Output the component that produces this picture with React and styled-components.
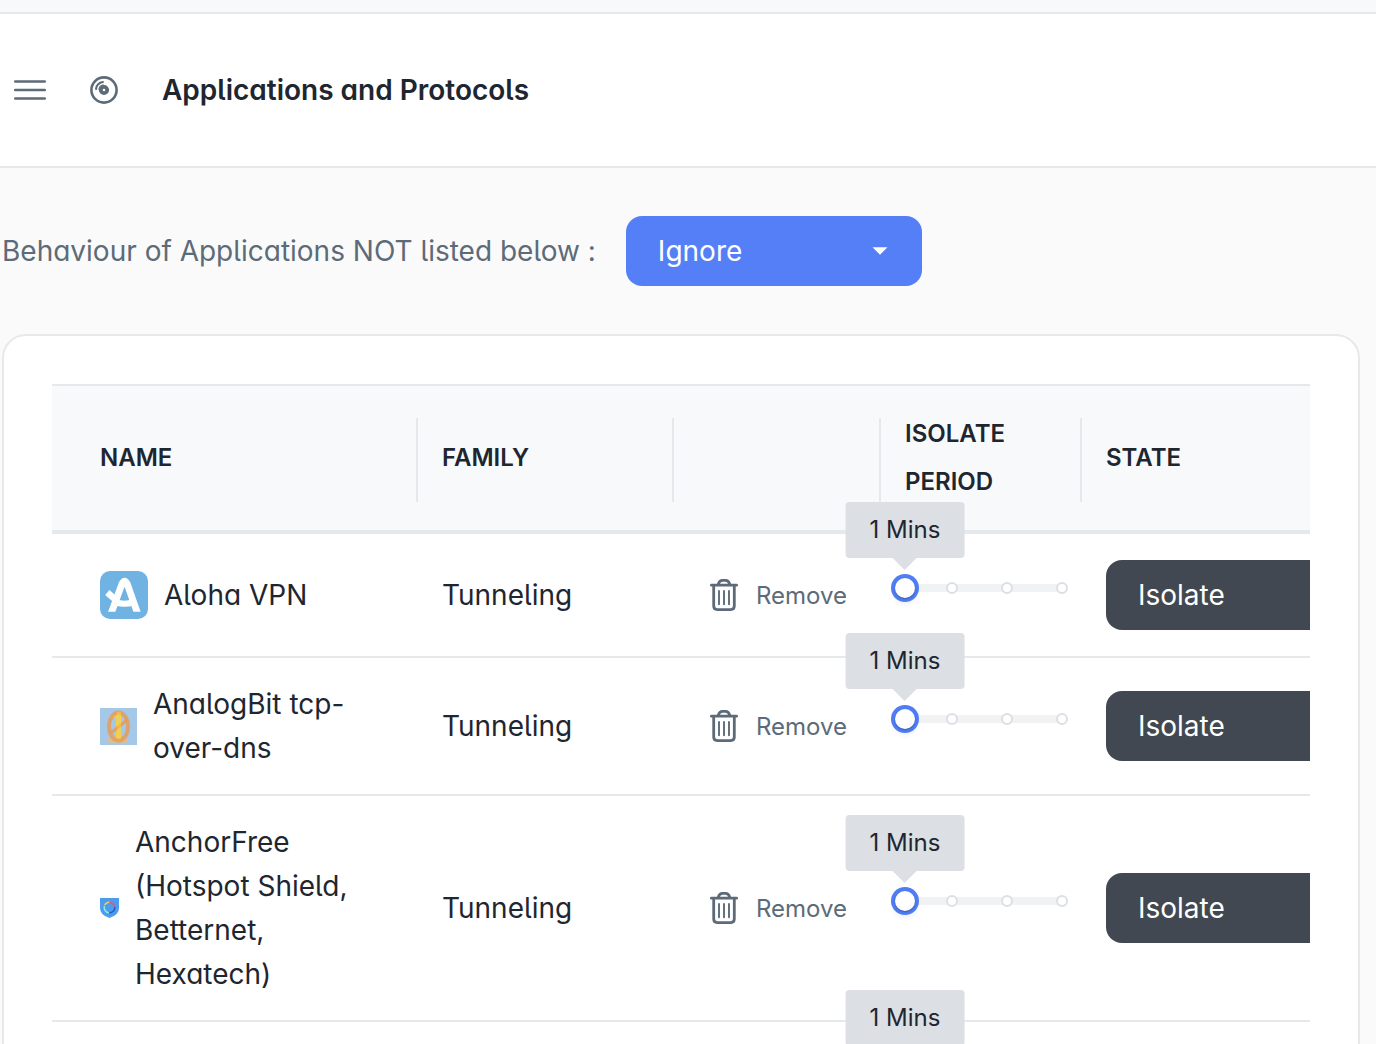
import React, { useId, useState } from 'react';
import styled, { createGlobalStyle } from 'styled-components';

const colors = {
    text: '#1e2630',
    muted: '#5d6b79',
    line: '#e6e9ec',
    page: '#fafafa',
    strip: '#f8f9fb',
    blue: '#557ff7',
    dark: '#414851',
    tip: '#dcdfe4',
};

const GlobalStyle = createGlobalStyle`
    * { box-sizing: border-box; }
    html { scrollbar-width: none; }
    body {
        margin: 0;
        background: ${colors.page};
        color: ${colors.text};
        font-family: Inter, 'Liberation Sans', sans-serif;
        font-size: 28px;
        line-height: 44px;
        font-optical-sizing: none;
    }
    select, button, input { font-family: inherit; }
`;

/* ------ Page shell ------ */
const Page = styled.div`
    min-height: 100vh;
`;

const TopStrip = styled.div`
    height: 14px;
    background: ${colors.strip};
    border-bottom: 2px solid ${colors.line};
`;

const Header = styled.header`
    display: flex;
    align-items: center;
    height: 154px;
    padding: 0 14px;
    background: #fff;
    border-bottom: 2px solid ${colors.line};
    color: ${colors.muted};
`;

const MenuButton = styled.button`
    display: flex;
    padding: 0;
    margin-right: 44px;
    border: 0;
    background: none;
    color: inherit;
    cursor: pointer;
`;

const Title = styled.h1`
    margin: 0 0 0 44px;
    color: ${colors.text};
    font-size: 28px;
    font-weight: 600;
    font-feature-settings: 'cv05', 'cv11';
`;

const Main = styled.main`
    padding: 48px 16px 48px 2px;
`;

const Toolbar = styled.div`
    display: flex;
    align-items: center;
    gap: 30px;
    margin-bottom: 48px;
`;

const Label = styled.label`
    color: ${colors.muted};
    font-feature-settings: 'cv05', 'cv11';
`;

/* ------ Drop-down ------ */
const SelectBox = styled.div`
    display: grid;
    align-items: center;
    width: 296px;
    color: #fff;

    > * { grid-area: 1 / 1; }
    svg {
        justify-self: end;
        margin-right: 34px;
        pointer-events: none;
    }
`;

const StyledSelect = styled.select`
    appearance: none;
    width: 100%;
    height: 70px;
    padding: 0 32px;
    border: 0;
    border-radius: 16px;
    background: ${(props) => (props.$dark ? colors.dark : colors.blue)};
    color: inherit;
    font-size: 28px;
    cursor: pointer;
`;

/* ------ Table ------ */
const Card = styled.section`
    padding: 48px;
    background: #fff;
    border: 2px solid ${colors.line};
    border-radius: 24px;
`;

const TableScroll = styled.div`
    overflow-x: auto;
`;

const Table = styled.table`
    table-layout: fixed;
    width: 100%;
    min-width: 1374px;
    border-spacing: 0;
`;

const Col = styled.col`
    width: ${(props) => props.$width}px;
`;

const Th = styled.th`
    padding: 24px;
    background: ${colors.strip};
    border-top: 2px solid ${colors.line};
    border-bottom: 4px solid ${colors.line};
    font-size: 24px;
    font-weight: 600;
    line-height: 48px;
    text-align: left;
    text-transform: uppercase;

    &:first-child { padding-left: 48px; }
    &:not(:last-child) {
        background: linear-gradient(${colors.line}, ${colors.line}) right 32px / 2px 84px no-repeat ${colors.strip};
    }
`;

const Td = styled.td`
    padding: 24px;
    border-bottom: 2px solid ${colors.line};
    font-feature-settings: 'cv05', 'cv11';

    &:first-child { padding-left: 48px; }
`;

const AppName = styled.div`
    display: flex;
    align-items: center;
    gap: 16px;

    svg { flex: none; }
`;

const RemoveButton = styled.button`
    display: flex;
    align-items: center;
    gap: 16px;
    padding: 0;
    margin: 0 auto;
    border: 0;
    background: none;
    color: ${colors.muted};
    font-size: 24px;
    cursor: pointer;
`;

const StateBox = styled(SelectBox)`
    margin: 2px 0;
`;

/* ------ Slider ------ */
const SliderBox = styled.div`
    position: relative;
    display: flex;
    align-items: center;
    width: 157px;
    height: 28px;
    margin-bottom: 14px;
`;

const Rail = styled.div`
    flex: 1;
    height: 8px;
    border-radius: 4px;
    background: #f1f2f4;
`;

const Dot = styled.span`
    position: absolute;
    top: 8px;
    width: 12px;
    height: 12px;
    margin-left: -6px;
    border: 2px solid ${colors.tip};
    border-radius: 50%;
    background: #fff;
`;

const Range = styled.input`
    appearance: none;
    position: absolute;
    left: -10px;
    width: 177px;
    height: 28px;
    margin: 0;
    background: none;
    cursor: pointer;

    &::-webkit-slider-thumb {
        appearance: none;
        width: 20px;
        height: 20px;
        border-radius: 50%;
        background: #fff;
        box-shadow: 0 1px 2px rgba(0, 0, 0, 0.3), 0 0 0 4px #4f7df5, 0 6px 6px rgba(0, 0, 0, 0.08);
    }
`;

const Tooltip = styled.output`
    position: absolute;
    bottom: 44px;
    padding: 4px 24px;
    border-radius: 4px;
    background: ${colors.tip};
    font-size: 24px;
    line-height: 48px;
    font-feature-settings: normal;
    white-space: nowrap;
    transform: translateX(-50%);

    &::after {
        content: '';
        position: absolute;
        top: 100%;
        left: 50%;
        margin-left: -12px;
        border: 12px solid transparent;
        border-top-color: ${colors.tip};
        border-bottom: 0;
    }
`;

/* ------ Icons ------ */
const MenuIcon = () => (
    <svg width="32" height="32" viewBox="0 0 32 32" stroke="currentColor" strokeWidth="2.5" strokeLinecap="round">
        <path d="M1.200 7.500h29.600M1.200 16h29.600M1.200 24.500h29.600" />
    </svg>
);

const DiscIcon = () => (
    <svg width="28" height="28" viewBox="0 0 28 28" fill="none" stroke="currentColor" strokeWidth="2.6">
        <circle cx="14" cy="14" r="12.600" />
        <circle cx="14" cy="14" r="3.200" strokeWidth="3.8" />
        <path d="M6 13A8.200 8.200 0 0 1 13 6" strokeWidth="2" strokeLinecap="round" />
        <path d="M8.600 13.500A5.500 5.500 0 0 1 13.500 8.600" strokeWidth="1" />
    </svg>
);

const CaretIcon = () => (
    <svg width="16" height="8" viewBox="0 0 16 8" fill="currentColor">
        <path d="M.5.3h15L8 7.8z" />
    </svg>
);

const TrashIcon = () => (
    <svg width="32" height="32" viewBox="0 0 32 32" fill="none" stroke="currentColor" strokeWidth="2.800" strokeLinecap="round" strokeLinejoin="round">
        <path d="M3.400 6.200h25.200" />
        <path d="M5.700 6.500v20.600q0 3.500 3.500 3.500h13.600q3.500 0 3.500-3.500V6.500" />
        <path d="M10.200 5.500q1.200-4.100 4.200-4.100h3.200q3 0 4.200 4.100" />
        <path d="M11 12v13.200M16 12v13.200M21 12v13.200" strokeWidth="1.900" />
    </svg>
);

const AlohaLogo = () => {
    const clipId = useId();

    return (
        <svg width="48" height="48" viewBox="0 0 48 48">
            <clipPath id={clipId}><path d="M0 0h48v40.700H0z" /></clipPath>
            <rect width="48" height="48" rx="10" fill="#70b3e3" />
            <g fill="none" stroke="#fff" clipPath={`url(#${clipId})`}>
                <path d="M10.200 45 22 12.800q2.600-5.500 5.200 0L38.500 45" strokeWidth="6.800" />
                <path d="M16 31.500q8.500 2.500 17 0" strokeWidth="6" />
                <path d="M7.300 21.500 16.500 29.500" strokeWidth="6.500" />
            </g>
        </svg>
    );
};

const AnalogBitLogo = () => (
    <svg width="37" height="37" viewBox="0 0 37 37">
        <rect width="37" height="37" fill="#a6c8e8" />
        <path d="M8 32.500h20" stroke="#e3bd86" strokeWidth="4" />
        <path d="M9 8q7 0 8-5h4v28h-5V10H9z" fill="#efd051" />
        <ellipse cx="18.500" cy="18.500" rx="9.500" ry="14" fill="none" stroke="#ea9a50" strokeWidth="4" strokeOpacity=".8" />
        <path d="M11 25 27 12" stroke="#ea9a50" strokeWidth="3.500" strokeOpacity=".8" />
        <path d="M17 4h4v27h-4z" fill="#efd051" fillOpacity=".5" />
    </svg>
);

const HotspotLogo = () => (
    <svg width="19" height="20" viewBox="0 0 19 20">
        <path d="M0 0h19v10q0 7-9.500 10Q0 17 0 10z" fill="#4c9cee" />
        <g fill="none" strokeWidth="1.500" strokeLinecap="round">
            <path d="M5 6.500A5.300 5.300 0 0 1 9 4.300" stroke="#f0d264" />
            <path d="M10 4.400A5.300 5.300 0 0 1 14.500 8" stroke="#e0567c" />
            <path d="M14.800 9.500A5.300 5.300 0 0 1 9.500 14.800" stroke="#245cc0" />
            <path d="M8.500 14.700A5.300 5.300 0 0 1 4.300 8.500" stroke="#8ce8ec" />
        </g>
    </svg>
);

// positions of the steps on the rail, in percent
const marks = [30, 65, 100];
const minutes = { 0: 1, 30: 5, 65: 30, 100: 60 };

const apps = [
    { name: 'Aloha VPN', family: 'Tunneling', Logo: AlohaLogo },
    { name: 'AnalogBit tcp-over-dns', family: 'Tunneling', Logo: AnalogBitLogo },
    { name: 'AnchorFree (Hotspot Shield, Betternet, Hexatech)', family: 'Tunneling', Logo: HotspotLogo },
    { name: 'Astrill VPN', family: 'Tunneling', Logo: HotspotLogo },
];

const PeriodSlider = ({ label }) => {
    const [value, setValue] = useState(0);

    const handleChange = (e) => {
        const next = Number(e.target.value);
        // snap to the closest step
        setValue([0, ...marks].reduce((a, b) => (Math.abs(b - next) < Math.abs(a - next) ? b : a)));
    };

    return (
        <SliderBox>
            <Rail />
            {marks.map((mark) => <Dot key={mark} style={{ left: `${mark}%` }} />)}
            <Range type="range" min="0" max="100" value={value} onChange={handleChange} aria-label={label} />
            <Tooltip style={{ left: `${value}%` }}>{minutes[value]} Mins</Tooltip>
        </SliderBox>
    );
};

const AppRow = ({ app, onRemove }) => (
    <tr>
        <Td>
            <AppName><app.Logo /><span>{app.name}</span></AppName>
        </Td>
        <Td>{app.family}</Td>
        <Td>
            <RemoveButton type="button" onClick={onRemove}><TrashIcon />Remove</RemoveButton>
        </Td>
        <Td>
            <PeriodSlider label={`Isolate period of ${app.name}`} />
        </Td>
        <Td>
            <StateBox>
                <StyledSelect $dark aria-label={`State of ${app.name}`}>
                    <option>Isolate</option>
                    <option>Ignore</option>
                </StyledSelect>
                <CaretIcon />
            </StateBox>
        </Td>
    </tr>
);

export default function App() {
    const [rows, setRows] = useState(apps);
    const behaviourId = useId();

    return (
        <Page>
            <GlobalStyle />
            <TopStrip />
            <Header>
                <MenuButton type="button" aria-label="Menu"><MenuIcon /></MenuButton>
                <DiscIcon />
                <Title>Applications and Protocols</Title>
            </Header>
            <Main>
                <Toolbar>
                    <Label htmlFor={behaviourId}>Behaviour of Applications NOT listed below :</Label>
                    <SelectBox>
                        <StyledSelect id={behaviourId}>
                            <option>Ignore</option>
                            <option>Isolate</option>
                        </StyledSelect>
                        <CaretIcon />
                    </SelectBox>
                </Toolbar>
                <Card>
                    <TableScroll>
                        <Table>
                            <colgroup>
                                <Col $width={366} />
                                <Col $width={256} />
                                <Col $width={207} />
                                <Col $width={201} />
                                <Col />
                            </colgroup>
                            <thead>
                                <tr>
                                    <Th>Name</Th>
                                    <Th>Family</Th>
                                    <Th aria-label="Actions" />
                                    <Th>Isolate Period</Th>
                                    <Th>State</Th>
                                </tr>
                            </thead>
                            <tbody>
                                {rows.map((app) => (
                                    <AppRow
                                        key={app.name}
                                        app={app}
                                        onRemove={() => setRows(rows.filter((row) => row !== app))}
                                    />
                                ))}
                            </tbody>
                        </Table>
                    </TableScroll>
                </Card>
            </Main>
        </Page>
    );
}
